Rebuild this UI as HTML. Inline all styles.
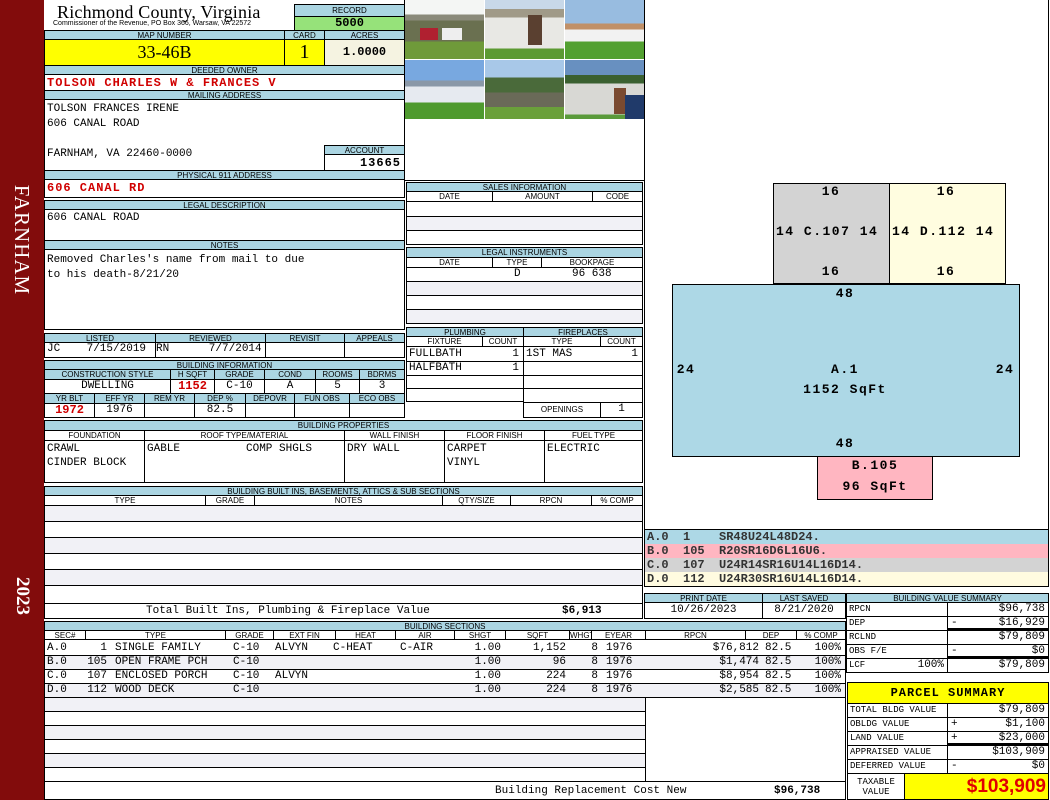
<!DOCTYPE html>
<html><head><meta charset="utf-8"><style>
*{margin:0;padding:0;box-sizing:border-box}
body{width:1050px;height:800px;position:relative;background:#fff;overflow:hidden;font-family:"Liberation Mono",monospace;font-size:11px;color:#000}
div{position:absolute}
.h{background:#abd5e2;border:1px solid #000;font:8px/8px "Liberation Sans",sans-serif;text-align:center;text-transform:uppercase;white-space:nowrap;overflow:hidden;padding-top:1px}
.c{border:1px solid #000;background:#fff;font:11px/13px "Liberation Mono",monospace;white-space:nowrap;overflow:hidden;padding-left:2px}
.s{background:#f1f1f6}
.r{text-align:right;padding-right:3px}
.m{text-align:center;padding-left:0}
.red{color:#d00000;font-weight:bold}
.p{border:1px solid #000}
.lb{font:bold 13px/14px "Liberation Mono",monospace;letter-spacing:1.5px;text-align:center;white-space:nowrap}
.sm{font-size:9px}
.row span{position:absolute;top:0}
.row .R{text-align:right}
</style></head><body>
<!-- sidebar -->
<div style="left:0;top:0;width:44px;height:800px;background:#820c0c"></div>
<div style="left:22px;top:240px;width:0;height:0"><div style="left:-70px;top:-12px;width:140px;font:21px/24px 'Liberation Serif',serif;color:#fff;text-align:center;transform:rotate(90deg);letter-spacing:1px">FARNHAM</div></div>
<div style="left:22px;top:596px;width:0;height:0"><div style="left:-40px;top:-12px;width:80px;font:bold 19px/24px 'Liberation Serif',serif;color:#fff;text-align:center;transform:rotate(90deg)">2023</div></div>

<!-- title -->
<div style="left:57px;top:2px;font:18px/20px 'Liberation Serif',serif;white-space:nowrap;letter-spacing:0.2px">Richmond County, Virginia</div>
<div style="left:53px;top:20px;font:7px/8px 'Liberation Sans',sans-serif;white-space:nowrap">Commissioner of the Revenue, PO Box 366, Warsaw, VA 22572</div>
<div class="h" style="left:294px;top:4px;width:111px;height:13px;padding-top:2px">RECORD</div>
<div class="c m" style="left:294px;top:16px;width:111px;height:15px;background:#96e27a;font-weight:bold;font-size:12px">5000</div>

<div class="h" style="left:44px;top:30px;width:241px;height:10px">MAP NUMBER</div>
<div class="h" style="left:284px;top:30px;width:41px;height:10px">CARD</div>
<div class="h" style="left:324px;top:30px;width:81px;height:10px">ACRES</div>
<div class="c m" style="left:44px;top:39px;width:241px;height:27px;background:#ffff00;font:18px/25px 'Liberation Serif',serif">33-46B</div>
<div class="c m" style="left:284px;top:39px;width:41px;height:27px;background:#ffff00;font:20px/25px 'Liberation Serif',serif">1</div>
<div class="c m" style="left:324px;top:39px;width:81px;height:27px;background:#f5f3e1;font:bold 12px/25px 'Liberation Mono',monospace">1.0000</div>

<div class="h" style="left:44px;top:65px;width:361px;height:10px">DEEDED OWNER</div>
<div class="c red" style="left:44px;top:74px;width:361px;height:17px;letter-spacing:1px;font-size:12px;line-height:16px">TOLSON CHARLES W &amp; FRANCES V</div>
<div class="h" style="left:44px;top:90px;width:361px;height:10px">MAILING ADDRESS</div>
<div class="c" style="left:44px;top:99px;width:361px;height:72px;line-height:15px;padding-top:2px">TOLSON FRANCES IRENE<br>606 CANAL ROAD<br><br>FARNHAM, VA 22460-0000</div>
<div class="h" style="left:324px;top:145px;width:81px;height:10px">ACCOUNT</div>
<div class="c r" style="left:324px;top:154px;width:81px;height:17px;font-weight:bold;font-size:12px;line-height:16px;letter-spacing:1px">13665</div>
<div class="h" style="left:44px;top:170px;width:361px;height:10px">PHYSICAL 911 ADDRESS</div>
<div class="c red" style="left:44px;top:179px;width:361px;height:19px;letter-spacing:1px;font-size:12px;line-height:17px">606 CANAL RD</div>

<div class="h" style="left:44px;top:200px;width:361px;height:10px">LEGAL DESCRIPTION</div>
<div class="c" style="left:44px;top:209px;width:361px;height:32px;padding-top:2px">606 CANAL ROAD</div>
<div class="h" style="left:44px;top:240px;width:361px;height:10px">NOTES</div>
<div class="c" style="left:44px;top:249px;width:361px;height:81px;padding-top:3px;line-height:15px">Removed Charles's name from mail to due<br>to his death-8/21/20</div>

<!-- listed -->
<div class="h" style="left:44px;top:333px;width:112px;height:10px">LISTED</div>
<div class="h" style="left:155px;top:333px;width:111px;height:10px">REVIEWED</div>
<div class="h" style="left:265px;top:333px;width:80px;height:10px">REVISIT</div>
<div class="h" style="left:344px;top:333px;width:61px;height:10px">APPEALS</div>
<div class="c" style="left:44px;top:342px;width:112px;height:16px">JC&nbsp;&nbsp;&nbsp;&nbsp;7/15/2019</div>
<div class="c" style="left:155px;top:342px;width:111px;height:16px;padding-left:0">RN&nbsp;&nbsp;&nbsp;&nbsp;&nbsp;&nbsp;7/7/2014</div>
<div class="c" style="left:265px;top:342px;width:80px;height:16px"></div>
<div class="c" style="left:344px;top:342px;width:61px;height:16px"></div>

<div class="h" style="left:44px;top:360px;width:361px;height:10px">BUILDING INFORMATION</div>
<div class="h" style="left:44px;top:369px;width:127px;height:11px">CONSTRUCTION STYLE</div>
<div class="h" style="left:170px;top:369px;width:45px;height:11px">H SQFT</div>
<div class="h" style="left:214px;top:369px;width:51px;height:11px">GRADE</div>
<div class="h" style="left:264px;top:369px;width:52px;height:11px">COND</div>
<div class="h" style="left:315px;top:369px;width:45px;height:11px">ROOMS</div>
<div class="h" style="left:359px;top:369px;width:46px;height:11px">BDRMS</div>
<div class="c m" style="left:44px;top:379px;width:127px;height:15px">DWELLING</div>
<div class="c m red" style="left:170px;top:379px;width:45px;height:15px;font-size:12px">1152</div>
<div class="c m" style="left:214px;top:379px;width:51px;height:15px">C-10</div>
<div class="c m" style="left:264px;top:379px;width:52px;height:15px">A</div>
<div class="c m" style="left:315px;top:379px;width:45px;height:15px">5</div>
<div class="c m" style="left:359px;top:379px;width:46px;height:15px">3</div>
<div class="h" style="left:44px;top:393px;width:51px;height:11px">YR BLT</div>
<div class="h" style="left:94px;top:393px;width:51px;height:11px">EFF YR</div>
<div class="h" style="left:144px;top:393px;width:51px;height:11px">REM YR</div>
<div class="h" style="left:194px;top:393px;width:52px;height:11px">DEP %</div>
<div class="h" style="left:245px;top:393px;width:50px;height:11px">DEPOVR</div>
<div class="h" style="left:294px;top:393px;width:56px;height:11px">FUN OBS</div>
<div class="h" style="left:349px;top:393px;width:56px;height:11px">ECO OBS</div>
<div class="c m red" style="left:44px;top:403px;width:51px;height:15px;font-size:12px">1972</div>
<div class="c m" style="left:94px;top:403px;width:51px;height:15px">1976</div>
<div class="c" style="left:144px;top:403px;width:51px;height:15px"></div>
<div class="c m" style="left:194px;top:403px;width:52px;height:15px">82.5</div>
<div class="c" style="left:245px;top:403px;width:50px;height:15px"></div>
<div class="c" style="left:294px;top:403px;width:56px;height:15px"></div>
<div class="c" style="left:349px;top:403px;width:56px;height:15px"></div>

<!-- photos -->
<div class="p" style="left:404px;top:0;width:241px;height:181px;border-top:none"></div>
<div style="left:405px;top:0;width:79px;height:59px;background:linear-gradient(#f4f6f4 0 25%,#8a8a7a 25% 35%,#6a7050 35% 70%,#6f9a3a 70%)"></div>
<div style="left:420px;top:28px;width:18px;height:12px;background:#b02030"></div>
<div style="left:442px;top:28px;width:20px;height:12px;background:#eee"></div>
<div style="left:485px;top:0;width:79px;height:59px;background:linear-gradient(#c8d8e8 0 15%,#a09a88 15% 30%,#e8e8e4 30% 82%,#5c9a32 82%)"></div>
<div style="left:528px;top:15px;width:14px;height:30px;background:#5a4030"></div>
<div style="left:565px;top:0;width:79px;height:59px;background:linear-gradient(#98bce0 0 40%,#c09068 40% 50%,#f2f2f2 50% 70%,#52a030 70%)"></div>
<div style="left:405px;top:60px;width:79px;height:59px;background:linear-gradient(#78a8e0 0 35%,#8a98a8 35% 45%,#e6eaf0 45% 72%,#4e9a2e 72%)"></div>
<div style="left:485px;top:60px;width:79px;height:59px;background:linear-gradient(#a8c8e8 0 30%,#4a6a3a 30% 55%,#6a6a58 55% 80%,#6aa03a 80%)"></div>
<div style="left:565px;top:60px;width:79px;height:59px;background:linear-gradient(#6890c0 0 25%,#3a6030 25% 40%,#d8d8d4 40% 92%,#5a9a3a 92%)"></div>
<div style="left:614px;top:88px;width:12px;height:26px;background:#7a4a30"></div>
<div style="left:625px;top:95px;width:19px;height:24px;background:#203a6a"></div>

<!-- sales -->
<div class="h" style="left:406px;top:182px;width:237px;height:10px">SALES INFORMATION</div>
<div class="h" style="left:406px;top:191px;width:87px;height:11px;background:#fff">DATE</div>
<div class="h" style="left:492px;top:191px;width:101px;height:11px;background:#fff">AMOUNT</div>
<div class="h" style="left:592px;top:191px;width:51px;height:11px;background:#fff">CODE</div>
<div class="c" style="left:406px;top:201px;width:237px;height:16px"></div>
<div class="c s" style="left:406px;top:216px;width:237px;height:15px"></div>
<div class="c" style="left:406px;top:230px;width:237px;height:15px"></div>
<div class="h" style="left:406px;top:247px;width:237px;height:11px">LEGAL INSTRUMENTS</div>
<div class="h" style="left:406px;top:257px;width:87px;height:11px;background:#fff">DATE</div>
<div class="h" style="left:492px;top:257px;width:50px;height:11px;background:#fff">TYPE</div>
<div class="h" style="left:541px;top:257px;width:102px;height:11px;background:#fff">BOOKPAGE</div>
<div class="c" style="left:406px;top:267px;width:237px;height:15px"><span style="position:absolute;left:107px">D</span><span style="position:absolute;left:165px">96 638</span></div>
<div class="c s" style="left:406px;top:281px;width:237px;height:15px"></div>
<div class="c" style="left:406px;top:295px;width:237px;height:15px"></div>
<div class="c s" style="left:406px;top:309px;width:237px;height:15px"></div>

<!-- plumbing -->
<div class="h" style="left:406px;top:327px;width:118px;height:10px">PLUMBING</div>
<div class="h" style="left:523px;top:327px;width:120px;height:10px">FIREPLACES</div>
<div class="h" style="left:406px;top:336px;width:77px;height:11px;background:#fff">FIXTURE</div>
<div class="h" style="left:482px;top:336px;width:42px;height:11px;background:#fff">COUNT</div>
<div class="h" style="left:523px;top:336px;width:78px;height:11px;background:#fff">TYPE</div>
<div class="h" style="left:600px;top:336px;width:43px;height:11px;background:#fff">COUNT</div>
<div class="c" style="left:406px;top:346px;width:118px;height:16px;line-height:15px">FULLBATH<span style="position:absolute;right:4px">1</span></div>
<div class="c" style="left:406px;top:361px;width:118px;height:15px">HALFBATH<span style="position:absolute;right:4px">1</span></div>
<div class="c" style="left:406px;top:375px;width:118px;height:14px"></div>
<div class="c" style="left:406px;top:388px;width:118px;height:14px"></div>
<div class="c" style="left:523px;top:346px;width:120px;height:16px;line-height:15px">1ST MAS<span style="position:absolute;right:4px">1</span></div>
<div class="c" style="left:523px;top:361px;width:120px;height:15px"></div>
<div class="c" style="left:523px;top:375px;width:120px;height:14px"></div>
<div class="c" style="left:523px;top:388px;width:120px;height:15px"></div>
<div class="c m" style="left:523px;top:402px;width:78px;height:16px;font:8px/14px 'Liberation Sans',sans-serif">OPENINGS</div>
<div class="c m" style="left:600px;top:402px;width:43px;height:16px">1</div>

<!-- building properties -->
<div class="h" style="left:44px;top:420px;width:599px;height:11px">BUILDING PROPERTIES</div>
<div class="h" style="left:44px;top:430px;width:101px;height:11px;background:#fff">FOUNDATION</div>
<div class="h" style="left:144px;top:430px;width:201px;height:11px;background:#fff">ROOF TYPE/MATERIAL</div>
<div class="h" style="left:344px;top:430px;width:101px;height:11px;background:#fff">WALL FINISH</div>
<div class="h" style="left:444px;top:430px;width:101px;height:11px;background:#fff">FLOOR FINISH</div>
<div class="h" style="left:544px;top:430px;width:99px;height:11px;background:#fff">FUEL TYPE</div>
<div class="c" style="left:44px;top:440px;width:101px;height:43px;padding-top:1px;line-height:14px">CRAWL<br>CINDER BLOCK</div>
<div class="c" style="left:144px;top:440px;width:201px;height:43px;padding-top:1px;line-height:14px">GABLE<span style="position:absolute;left:101px">COMP SHGLS</span></div>
<div class="c" style="left:344px;top:440px;width:101px;height:43px;padding-top:1px;line-height:14px">DRY WALL</div>
<div class="c" style="left:444px;top:440px;width:101px;height:43px;padding-top:1px;line-height:14px">CARPET<br>VINYL</div>
<div class="c" style="left:544px;top:440px;width:99px;height:43px;padding-top:1px;line-height:14px">ELECTRIC</div>

<!-- built ins -->
<div class="h" style="left:44px;top:486px;width:599px;height:10px">BUILDING BUILT INS, BASEMENTS, ATTICS &amp; SUB SECTIONS</div>
<div class="h" style="left:44px;top:495px;width:162px;height:11px;background:#fff">TYPE</div>
<div class="h" style="left:205px;top:495px;width:50px;height:11px;background:#fff">GRADE</div>
<div class="h" style="left:254px;top:495px;width:189px;height:11px;background:#fff">NOTES</div>
<div class="h" style="left:442px;top:495px;width:69px;height:11px;background:#fff">QTY/SIZE</div>
<div class="h" style="left:510px;top:495px;width:82px;height:11px;background:#fff">RPCN</div>
<div class="h" style="left:591px;top:495px;width:52px;height:11px;background:#fff">% COMP</div>
<div class="c s" style="left:44px;top:505px;width:599px;height:17px"></div>
<div class="c" style="left:44px;top:521px;width:599px;height:17px"></div>
<div class="c s" style="left:44px;top:537px;width:599px;height:17px"></div>
<div class="c" style="left:44px;top:553px;width:599px;height:17px"></div>
<div class="c s" style="left:44px;top:569px;width:599px;height:17px"></div>
<div class="c" style="left:44px;top:585px;width:599px;height:19px"></div>
<div class="c" style="left:44px;top:603px;width:599px;height:16px;line-height:15px"><span style="position:absolute;left:101px">Total Built Ins, Plumbing &amp; Fireplace Value</span><span style="position:absolute;left:517px;font-weight:bold">$6,913</span></div>

<!-- building sections -->
<div class="h" style="left:44px;top:621px;width:802px;height:10px">BUILDING SECTIONS</div>
<div class="h" style="left:44px;top:630px;width:42px;height:10px;background:#fff">SEC#</div>
<div class="h" style="left:85px;top:630px;width:141px;height:10px;background:#fff">TYPE</div>
<div class="h" style="left:225px;top:630px;width:49px;height:10px;background:#fff">GRADE</div>
<div class="h" style="left:273px;top:630px;width:63px;height:10px;background:#fff">EXT FIN</div>
<div class="h" style="left:335px;top:630px;width:61px;height:10px;background:#fff">HEAT</div>
<div class="h" style="left:395px;top:630px;width:60px;height:10px;background:#fff">AIR</div>
<div class="h" style="left:454px;top:630px;width:52px;height:10px;background:#fff">SHGT</div>
<div class="h" style="left:505px;top:630px;width:65px;height:10px;background:#fff">SQFT</div>
<div class="h" style="left:569px;top:630px;width:23px;height:10px;background:#fff">WHGT</div>
<div class="h" style="left:591px;top:630px;width:55px;height:10px;background:#fff">EYEAR</div>
<div class="h" style="left:645px;top:630px;width:101px;height:10px;background:#fff">RPCN</div>
<div class="h" style="left:745px;top:630px;width:52px;height:10px;background:#fff">DEP</div>
<div class="h" style="left:796px;top:630px;width:50px;height:10px;background:#fff">% COMP</div>

<div class="c row" style="left:44px;top:639px;width:802px;height:17px;line-height:16px"><span style="left:2px">A.0</span><span class="R" style="left:40px;width:22px">1</span><span style="left:70px">SINGLE FAMILY</span><span style="left:188px">C-10</span><span style="left:230px">ALVYN</span><span style="left:288px">C-HEAT</span><span style="left:355px">C-AIR</span><span class="R" style="left:410px;width:46px">1.00</span><span class="R" style="left:470px;width:51px">1,152</span><span class="R" style="left:530px;width:23px">8</span><span style="left:561px">1976</span><span class="R" style="left:640px;width:74px">$76,812</span><span style="left:720px">82.5</span><span class="R" style="left:750px;width:46px">100%</span></div>
<div class="c s row" style="left:44px;top:655px;width:802px;height:15px"><span style="left:2px">B.0</span><span class="R" style="left:40px;width:22px">105</span><span style="left:70px">OPEN FRAME PCH</span><span style="left:188px">C-10</span><span class="R" style="left:410px;width:46px">1.00</span><span class="R" style="left:470px;width:51px">96</span><span class="R" style="left:530px;width:23px">8</span><span style="left:561px">1976</span><span class="R" style="left:640px;width:74px">$1,474</span><span style="left:720px">82.5</span><span class="R" style="left:750px;width:46px">100%</span></div>
<div class="c row" style="left:44px;top:669px;width:802px;height:15px"><span style="left:2px">C.0</span><span class="R" style="left:40px;width:22px">107</span><span style="left:70px">ENCLOSED PORCH</span><span style="left:188px">C-10</span><span style="left:230px">ALVYN</span><span class="R" style="left:410px;width:46px">1.00</span><span class="R" style="left:470px;width:51px">224</span><span class="R" style="left:530px;width:23px">8</span><span style="left:561px">1976</span><span class="R" style="left:640px;width:74px">$8,954</span><span style="left:720px">82.5</span><span class="R" style="left:750px;width:46px">100%</span></div>
<div class="c s row" style="left:44px;top:683px;width:802px;height:15px"><span style="left:2px">D.0</span><span class="R" style="left:40px;width:22px">112</span><span style="left:70px">WOOD DECK</span><span style="left:188px">C-10</span><span class="R" style="left:410px;width:46px">1.00</span><span class="R" style="left:470px;width:51px">224</span><span class="R" style="left:530px;width:23px">8</span><span style="left:561px">1976</span><span class="R" style="left:640px;width:74px">$2,585</span><span style="left:720px">82.5</span><span class="R" style="left:750px;width:46px">100%</span></div>
<div class="c s" style="left:44px;top:697px;width:602px;height:15px"></div>
<div class="c" style="left:44px;top:711px;width:602px;height:15px"></div>
<div class="c s" style="left:44px;top:725px;width:602px;height:15px"></div>
<div class="c" style="left:44px;top:739px;width:602px;height:15px"></div>
<div class="c s" style="left:44px;top:753px;width:602px;height:15px"></div>
<div class="c" style="left:44px;top:767px;width:602px;height:15px"></div>
<div class="c" style="left:44px;top:781px;width:802px;height:19px;line-height:18px"><span style="position:absolute;left:450px">Building Replacement Cost New</span><span style="position:absolute;left:729px;font-weight:bold">$96,738</span></div>
<div class="c" style="left:645px;top:697px;width:201px;height:85px;border-top:none;background:transparent"></div>

<!-- sketch panel -->
<div style="left:644px;top:0;width:405px;height:530px;border-left:1px solid #000;border-right:1px solid #000"></div>
<div style="left:773px;top:183px;width:117px;height:101px;background:#d3d3d3;border:1px solid #000"></div>
<div style="left:889px;top:183px;width:117px;height:101px;background:#fffde0;border:1px solid #000"></div>
<div style="left:672px;top:284px;width:348px;height:173px;background:#add8e6;border:1px solid #000"></div>
<div style="left:817px;top:456px;width:116px;height:44px;background:#ffb6c1;border:1px solid #000"></div>
<div class="lb" style="left:811px;top:185px;width:40px">16</div>
<div class="lb" style="left:811px;top:265px;width:40px">16</div>
<div class="lb" style="left:776px;top:225px;width:112px;text-align:left">14 C.107 14</div>
<div class="lb" style="left:926px;top:185px;width:40px">16</div>
<div class="lb" style="left:926px;top:265px;width:40px">16</div>
<div class="lb" style="left:892px;top:225px;width:112px;text-align:left">14 D.112 14</div>
<div class="lb" style="left:825px;top:287px;width:40px">48</div>
<div class="lb" style="left:825px;top:437px;width:40px">48</div>
<div class="lb" style="left:675px;top:363px;width:22px">24</div>
<div class="lb" style="left:994px;top:363px;width:22px">24</div>
<div class="lb" style="left:795px;top:363px;width:100px">A.1</div>
<div class="lb" style="left:785px;top:383px;width:120px">1152 SqFt</div>
<div class="lb" style="left:825px;top:459px;width:100px">B.105</div>
<div class="lb" style="left:815px;top:480px;width:120px">96 SqFt</div>

<div style="left:644px;top:529px;width:405px;height:58px;border:1px solid #000;font:bold 12px/14px 'Liberation Mono',monospace;color:#333">
<div style="left:0;top:0;width:403px;height:14px;background:#add8e6;padding-left:2px;white-space:pre">A.0  1    SR48U24L48D24.</div>
<div style="left:0;top:14px;width:403px;height:14px;background:#ffb6c1;padding-left:2px;white-space:pre">B.0  105  R20SR16D6L16U6.</div>
<div style="left:0;top:28px;width:403px;height:14px;background:#d3d3d3;padding-left:2px;white-space:pre">C.0  107  U24R14SR16U14L16D14.</div>
<div style="left:0;top:42px;width:403px;height:14px;background:#fffbe0;padding-left:2px;white-space:pre">D.0  112  U24R30SR16U14L16D14.</div>
</div>

<!-- print date -->
<div class="h" style="left:644px;top:593px;width:119px;height:10px">PRINT DATE</div>
<div class="h" style="left:762px;top:593px;width:84px;height:10px">LAST SAVED</div>
<div class="c m" style="left:644px;top:602px;width:119px;height:17px;line-height:15px">10/26/2023</div>
<div class="c m" style="left:762px;top:602px;width:84px;height:17px;line-height:15px">8/21/2020</div>

<!-- value summary -->
<div class="h" style="left:846px;top:593px;width:203px;height:10px">BUILDING VALUE SUMMARY</div>
<div class="c sm" style="left:846px;top:602px;width:102px;height:15px">RPCN</div><div class="c r" style="left:947px;top:602px;width:102px;height:15px">$96,738</div>
<div class="c sm" style="left:846px;top:616px;width:102px;height:15px">DEP</div><div class="c r" style="left:947px;top:616px;width:102px;height:15px;border-bottom:3px solid #000;line-height:12px">$16,929<span style="position:absolute;left:3px">-</span></div>
<div class="c sm" style="left:846px;top:630px;width:102px;height:15px">RCLND</div><div class="c r" style="left:947px;top:630px;width:102px;height:15px">$79,809</div>
<div class="c sm" style="left:846px;top:644px;width:102px;height:15px">OBS F/E</div><div class="c r" style="left:947px;top:644px;width:102px;height:15px;border-bottom:3px solid #000;line-height:12px">$0<span style="position:absolute;left:3px">-</span></div>
<div class="c sm" style="left:846px;top:658px;width:102px;height:15px">LCF<span style="position:absolute;right:3px;font-size:11px">100%</span></div><div class="c r" style="left:947px;top:658px;width:102px;height:15px">$79,809</div>

<!-- parcel summary -->
<div class="c m" style="left:847px;top:682px;width:202px;height:22px;background:#ffff00;font:bold 12px/20px 'Liberation Mono',monospace;letter-spacing:1px">PARCEL SUMMARY</div>
<div class="c sm" style="left:847px;top:703px;width:101px;height:15px">TOTAL BLDG VALUE</div><div class="c r" style="left:947px;top:703px;width:102px;height:15px">$79,809</div>
<div class="c sm" style="left:847px;top:717px;width:101px;height:15px">OBLDG VALUE</div><div class="c r" style="left:947px;top:717px;width:102px;height:15px">$1,100<span style="position:absolute;left:3px">+</span></div>
<div class="c sm" style="left:847px;top:731px;width:101px;height:15px">LAND VALUE</div><div class="c r" style="left:947px;top:731px;width:102px;height:15px;border-bottom:3px solid #000;line-height:12px">$23,000<span style="position:absolute;left:3px">+</span></div>
<div class="c sm" style="left:847px;top:745px;width:101px;height:15px">APPRAISED VALUE</div><div class="c r" style="left:947px;top:745px;width:102px;height:15px">$103,909</div>
<div class="c sm" style="left:847px;top:759px;width:101px;height:15px">DEFERRED VALUE</div><div class="c r" style="left:947px;top:759px;width:102px;height:15px">$0<span style="position:absolute;left:3px">-</span></div>
<div class="c sm m" style="left:847px;top:773px;width:58px;height:27px;line-height:10px;padding-top:3px">TAXABLE<br>VALUE</div>
<div class="c r" style="left:904px;top:773px;width:145px;height:27px;background:#ffff00;color:#e00000;font:bold 19px/25px 'Liberation Sans',sans-serif;padding-right:2px">$103,909</div>
</body></html>
